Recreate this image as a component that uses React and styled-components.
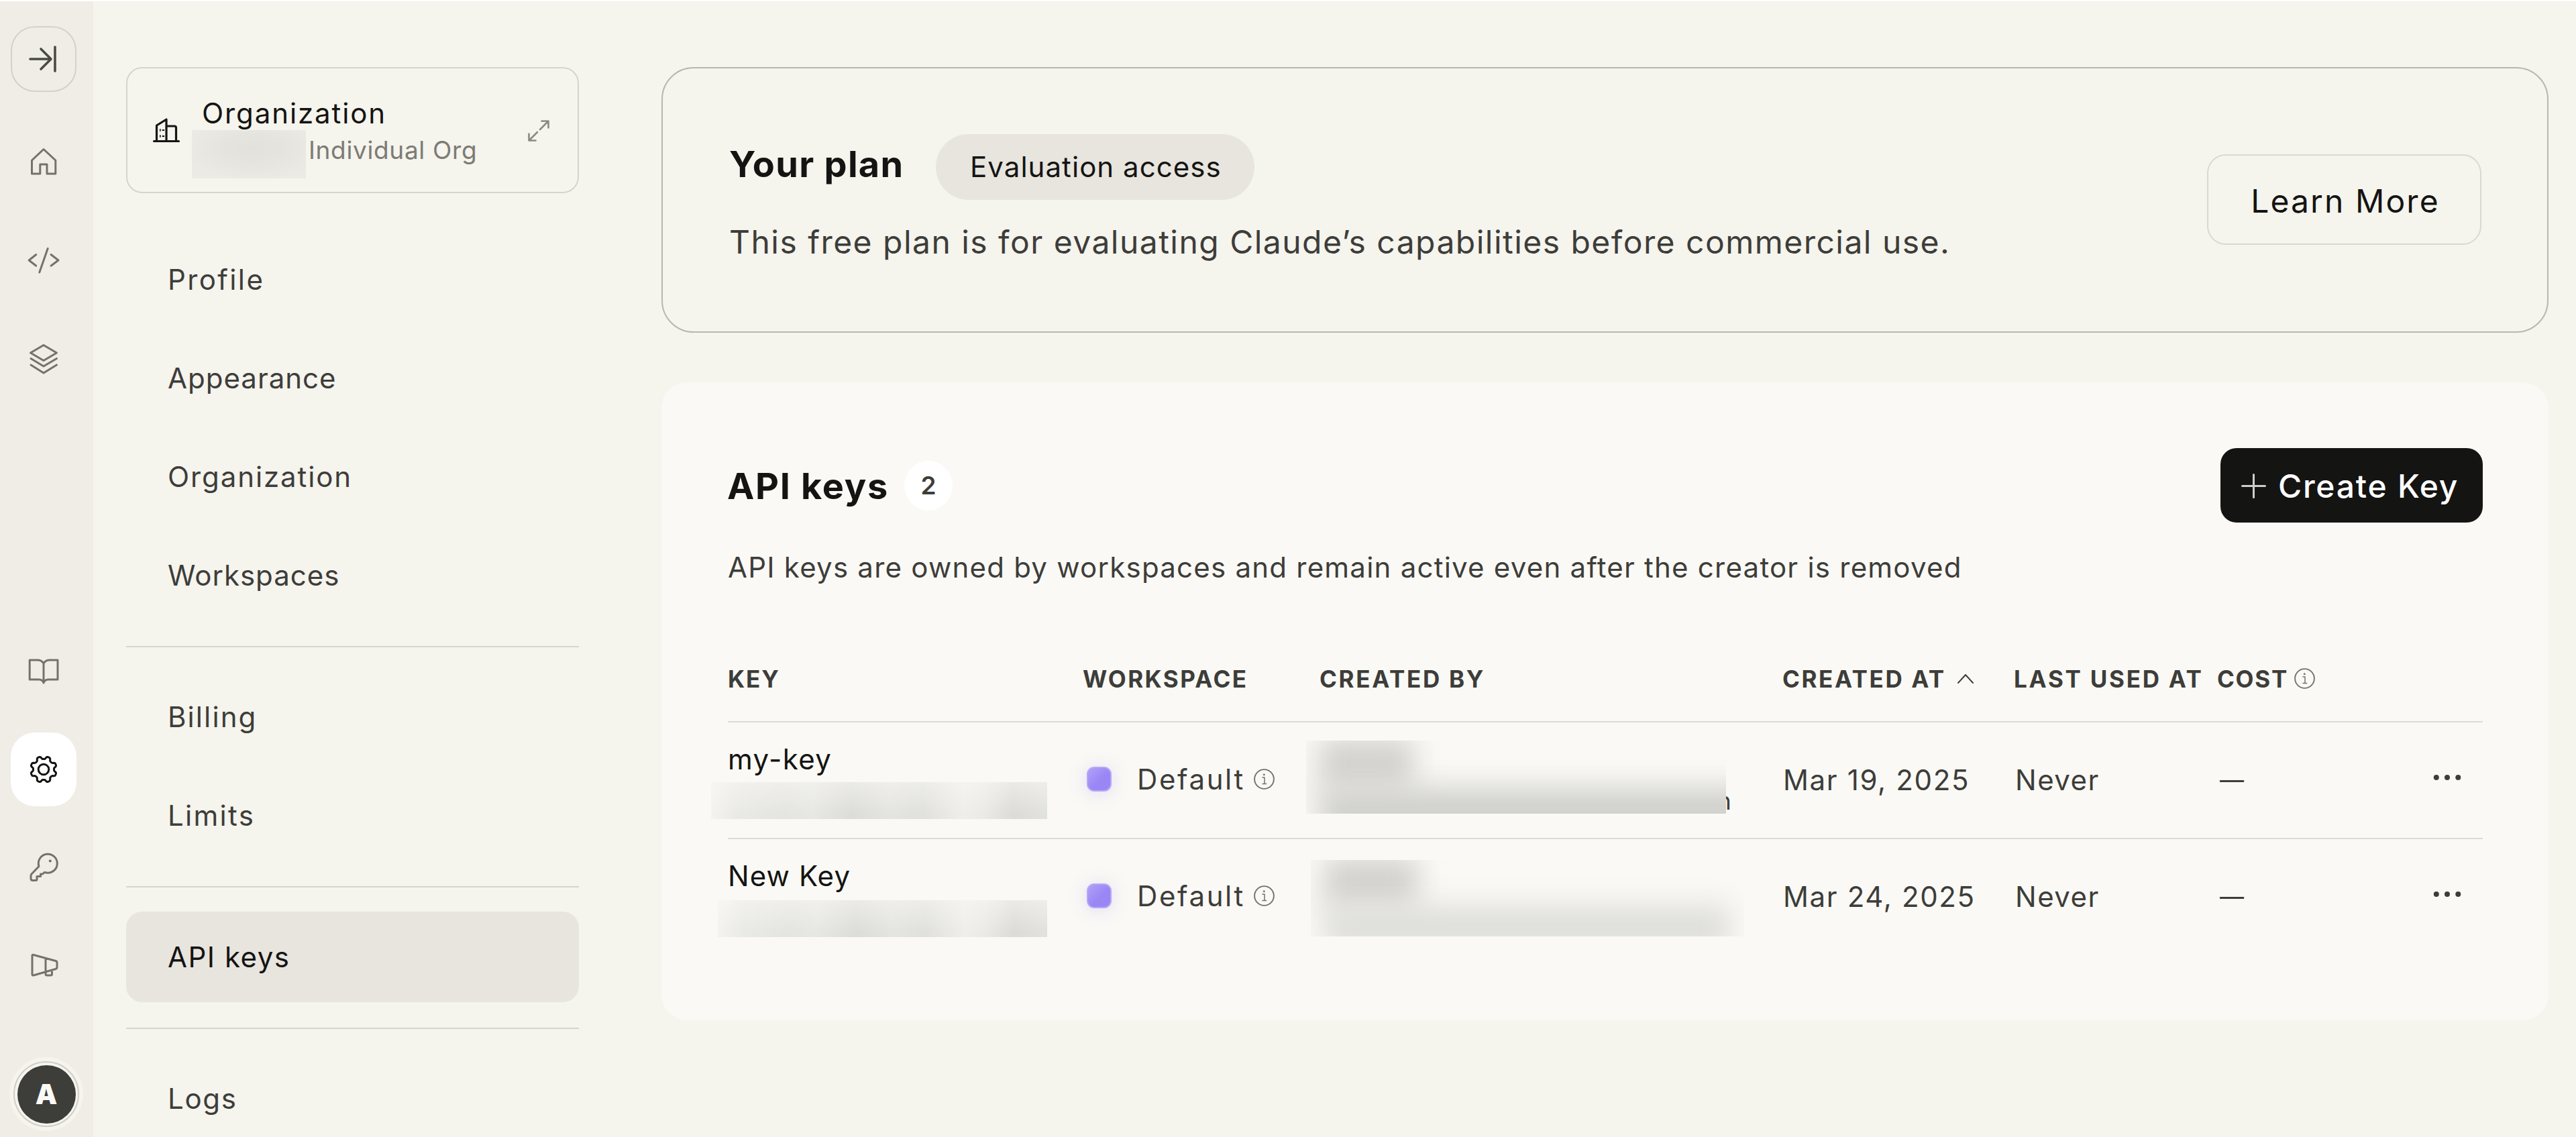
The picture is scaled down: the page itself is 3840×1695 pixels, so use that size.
import React from "react";
import styled, { createGlobalStyle } from "styled-components";

const GlobalStyle = createGlobalStyle`
  * { box-sizing: border-box; }
  body {
    margin: 0;
    background: #f5f4ed;
    font-family: "Inter", "Liberation Sans", sans-serif;
    color: #141413;
  }
  svg { display: block; flex-shrink: 0; overflow: visible; }
`;

/* ---------- icons ---------- */

const Icon = ({ d, size = 48, stroke = 3, children }) => (
  <svg
    width={size}
    height={size}
    viewBox={`0 0 ${size} ${size}`}
    fill="none"
    stroke="currentColor"
    strokeWidth={stroke}
    strokeLinejoin="round"
    strokeLinecap="round"
  >
    {d && <path d={d} />}
    {children}
  </svg>
);

const ExpandSidebarIcon = () => (
  <Icon stroke={3.6} d="M4 24H35M20 9L35 24L20 39M41 6V42" />
);
const HomeIcon = () => (
  <Icon d="M6.5 22L24 5.5L41.8 22V42H29V28H18.8V42H6.5Z" />
);
const CodeIcon = () => (
  <Icon d="M12.8 15.5L2.2 24L12.8 32.2M30.2 6.5L17.8 42M35 15.5L46 24L35 32.2" />
);
const LayersIcon = () => (
  <Icon d="M24 3.5L43.5 15L24 26.5L4.5 15ZM5 23.5L24 35L43.5 23.5M5 33L24 45L43.5 33" />
);
const BookIcon = () => (
  <Icon d="M24 12C22 8.5 18 7 15 7H3.2V36H17C21 36 23 37.5 24 41C25 37.5 27 36 31 36H45V7H33C30 7 26 8.5 24 12ZM24 12V41" />
);
const KeyIcon = () => (
  <Icon d="M17 22.5A14 14 0 1 1 25.5 31.3L22.5 34H19.5V37.5H14V42C14 43 13 43.5 12 43.5H8C6 43.5 5 42.5 5 40.5V36.5C5 35.5 5.3 34.8 6 34Z">
    <circle cx="33.8" cy="14.5" r="1.4" fill="currentColor" strokeWidth="1.4" />
  </Icon>
);
const MegaphoneIcon = () => (
  <Icon d="M7 9.5C7 8.5 8 8 9 8.5L42 17.5C43.5 18 44 19 44 20V27C44 28.5 43.5 29 42 29.5L9 39C8 39.3 7 38.8 7 38ZM27 13.5V34M27 34.5V37C27 38.5 28 39 29 39H34.5C36 39 36.5 38 36.5 37V31.5" />
);

// eight soft teeth around the hub
const gearPath = () => {
  const pts = [];
  for (let deg = 0; deg < 360; deg += 3) {
    const a = (deg * Math.PI) / 180;
    const r = 17.5 + 2.1 * Math.tanh(2 * Math.cos(8 * (a - Math.PI / 8)));
    pts.push(`${(24 + r * Math.cos(a)).toFixed(2)} ${(24 + r * Math.sin(a)).toFixed(2)}`);
  }
  return `M${pts.join("L")}Z`;
};
const GearIcon = () => (
  <Icon stroke={3} d={gearPath()}>
    <circle cx="24" cy="24" r="7.8" />
  </Icon>
);

const BuildingIcon = () => (
  <Icon size={40} stroke={3.2} d="M1.5 35.5H38.5M5.5 35V12L20 3V35M20 13H32C33.8 13 34.5 14 34.5 15.5V35">
    <path d="M10 19H11.6M15.4 18V20M10 28H11.6M15.4 27V29" strokeWidth="3.4" strokeLinecap="butt" />
  </Icon>
);
const ResizeIcon = () => (
  <Icon size={32} stroke={2.6} d="M18 14L30 2M20.5 1.5H30.5V11.5M14 18L2 30M1.5 20.5V30.5H11.5" />
);
const PlusIcon = () => <Icon size={37} stroke={3} d="M18.5 1.5V35.5M1.5 18.5H35.5" />;
const SortIcon = () => <Icon size={24} stroke={2} d="M1 18L12 6L23 18" />;
const InfoIcon = () => (
  <Icon size={31} stroke={1.9}>
    <circle cx="15.5" cy="15.5" r="14.4" />
    <path d="M13 13H16V22M13 22.4H18.6" strokeWidth="1.5" />
    <circle cx="15.2" cy="8.8" r="1.1" fill="currentColor" strokeWidth="0.8" />
  </Icon>
);
const MoreIcon = () => (
  <svg width="42" height="10" viewBox="0 0 42 10" fill="currentColor">
    <circle cx="4.8" cy="5" r="4" />
    <circle cx="21" cy="5" r="4" />
    <circle cx="37.3" cy="5" r="4" />
  </svg>
);

/* ---------- shell ---------- */

const Page = styled.div`
  display: flex;
  align-items: flex-start;
  width: 3840px;
  height: 1695px;
  overflow: hidden;
  border-top: 2px solid #fff;
  background: #f5f4ed;
`;

const Rail = styled.nav`
  display: flex;
  flex-direction: column;
  flex-shrink: 0;
  width: 139px;
  height: 1693px;
  padding: 37px 9px 0 0;
  background: #f0ede6;
  color: #73726c;
`;

const RailButton = styled.button`
  display: flex;
  align-items: center;
  justify-content: center;
  width: 98px;
  height: ${(p) => (p.$outlined ? 98 : 110)}px;
  padding: 0;
  border: ${(p) => (p.$outlined ? "2px solid #d3d2ca" : "0")};
  border-radius: 36px;
  background: ${(p) => (p.$active ? "#fff" : "transparent")};
  color: ${(p) => (p.$active ? "#141413" : p.$outlined ? "#4a4a46" : "inherit")};
`;

const ToggleSlot = styled.div`
  display: flex;
  justify-content: center;
  margin-bottom: 30px;
`;

const RailGroup = styled.div`
  display: grid;
  grid-auto-rows: ${(p) => p.$row}px;
  place-items: center;
  margin-bottom: ${(p) => p.$after}px;
`;

const AvatarHalo = styled.div`
  display: grid;
  place-items: center;
  width: 110px;
  height: 110px;
  margin-left: 14px;
  border-radius: 50%;
  background: #f5f4ed;
`;

const AvatarRing = styled.div`
  display: grid;
  place-items: center;
  width: 98px;
  height: 98px;
  border: 2px solid #cfcec7;
  border-radius: 50%;
`;

const Avatar = styled.div`
  display: grid;
  place-items: center;
  width: 87px;
  height: 87px;
  border-radius: 50%;
  background: #3d3d3a;
  color: #faf9f5;
  font-size: 41px;
  font-weight: 900;
`;

/* ---------- settings sidebar ---------- */

const Sidebar = styled.aside`
  flex-shrink: 0;
  width: 675px;
  margin-left: 49px;
  padding-top: 98px;
`;

const OrgSwitcher = styled.div`
  display: flex;
  align-items: flex-start;
  height: 188px;
  margin-bottom: 61px;
  padding: 41px 42px 0 38px;
  border: 2px solid #d6d5cd;
  border-radius: 24px;
`;

const OrgIcon = styled.div`
  margin: 32px 33px 0 0;
`;

const OrgText = styled.div`
  flex: 1;
`;

const OrgLabel = styled.div`
  font-size: 42px;
  line-height: 51px;
  letter-spacing: 1.9px;
`;

const OrgName = styled.div`
  display: flex;
  align-items: flex-start;
  font-size: 37px;
  line-height: 44px;
  letter-spacing: 0.65px;
  color: #7c7b75;
`;

const OrgNameText = styled.span`
  margin: 8px 0 0 4px;
  white-space: nowrap;
`;

const ResizeSlot = styled.div`
  margin-top: 36px;
  color: #8a8983;
`;

const NavGroup = styled.div`
  display: grid;
  gap: 12px;
`;

const NavItem = styled.a`
  display: flex;
  align-items: center;
  height: 135px;
  padding-left: 62px;
  border-radius: 24px;
  background: ${(p) => (p.$active ? "#e8e5de" : "transparent")};
  color: ${(p) => (p.$active ? "#141413" : "#3d3d3a")};
  font-size: 42px;
  letter-spacing: ${(p) => p.$track}px;
`;

const NavDivider = styled.hr`
  height: 2px;
  margin: 38px 0 36px;
  border: 0;
  background: #d6d5cd;
`;

/* ---------- content ---------- */

const Main = styled.main`
  display: flex;
  flex-direction: column;
  gap: 74px;
  width: 2813px;
  margin-left: 123px;
  padding-top: 98px;
`;

const PlanCard = styled.section`
  display: flex;
  justify-content: space-between;
  height: 396px;
  padding: 98px 98px 0 99px;
  border: 2px solid #b7b6b0;
  border-radius: 48px;
`;

const PlanHeading = styled.div`
  display: flex;
  align-items: center;
  height: 98px;
`;

const PlanTitle = styled.h2`
  width: 308px;
  margin: -10px 0 0;
  font-size: 54px;
  font-weight: 650;
  letter-spacing: 1.3px;
  white-space: nowrap;
`;

const Pill = styled.span`
  display: flex;
  align-items: center;
  width: 475px;
  height: 98px;
  padding: 0 0 2px 51px;
  border-radius: 49px;
  background: #e8e5de;
  font-size: 42px;
  letter-spacing: 1.05px;
  white-space: nowrap;
`;

const PlanText = styled.p`
  margin: 31px 0 0;
  color: #3d3d3a;
  font-size: 48px;
  line-height: 64px;
  letter-spacing: 1.47px;
  white-space: nowrap;
`;

const LearnMore = styled.button`
  width: 409px;
  height: 135px;
  margin-top: 30px;
  padding: 3px 0 0 3px;
  border: 2px solid #dad9d1;
  border-radius: 28px;
  background: transparent;
  color: #141413;
  font: 400 48px "Inter", sans-serif;
  letter-spacing: 2.1px;
`;

const KeysCard = styled.section`
  height: 951px;
  padding: 98px 98px 0 99px;
  border-radius: 38px;
  background: #faf9f5;
`;

const KeysHeader = styled.div`
  display: flex;
  align-items: center;
  height: 111px;
`;

const KeysTitle = styled.h2`
  width: 264px;
  margin: 1px 0 0 -1px;
  font-size: 54px;
  font-weight: 650;
  letter-spacing: 1.7px;
  white-space: nowrap;
`;

const Count = styled.span`
  display: grid;
  place-items: center;
  width: 72px;
  height: 74px;
  border-radius: 50%;
  background: #fff;
  color: #3d3d3a;
  font-size: 37px;
  font-weight: 600;
`;

const CreateKey = styled.button`
  display: flex;
  align-items: center;
  gap: 18px;
  width: 391px;
  height: 111px;
  margin-left: auto;
  padding: 1px 0 0 31px;
  border: 0;
  border-radius: 24px;
  background: #141413;
  color: #cfcec9;
  font: 550 48px "Inter", sans-serif;
  letter-spacing: 1.75px;
  white-space: nowrap;
`;

const CreateKeyLabel = styled.span`
  color: #fff;
`;

const KeysText = styled.p`
  margin: 37px 0 72px;
  color: #3d3d3a;
  font-size: 42px;
  line-height: 60px;
  letter-spacing: 1.23px;
  white-space: nowrap;
`;

const TableRow = styled.div`
  display: grid;
  grid-template-columns: 529px 353px 690px 345px 303px 1fr 74px;
  align-items: center;
  height: ${(p) => (p.$head ? 129 : 174)}px;
  border-bottom: ${(p) => (p.$last ? "2px solid transparent" : "2px solid #dcdbd5")};
`;

const HeadCell = styled.div`
  display: flex;
  align-items: center;
  gap: ${(p) => p.$gap || 0}px;
  color: #3d3d3a;
  font-size: 35px;
  font-weight: 750;
  letter-spacing: ${(p) => p.$track}px;
  white-space: nowrap;
`;

const HeadIcon = styled.span`
  color: #73726c;
`;

const KeyCell = styled.div`
  align-self: start;
  padding-top: 25px;
`;

const KeyName = styled.div`
  font-size: 42px;
  line-height: 60px;
  letter-spacing: ${(p) => p.$track}px;
`;

const WorkspaceCell = styled.div`
  display: flex;
  align-items: center;
  padding: 0 0 4px 6px;
  color: #3d3d3a;
  font-size: 42px;
  letter-spacing: 2.6px;
`;

const WorkspaceSwatch = styled.span`
  width: 37px;
  height: 37px;
  margin-right: 38px;
  border: 2px solid #b5a8f8;
  border-radius: 11px;
  background: linear-gradient(135deg, #b0a1f7, #9a87f5 55%);
  box-shadow: 0 2px 26px rgba(154, 135, 245, 0.26);
`;

const WorkspaceInfo = styled.span`
  margin-left: 13px;
  color: #73726c;
`;

const CreatedByCell = styled.div`
  display: flex;
  align-self: start;
`;

const TextCell = styled.div`
  padding: 0 0 1px ${(p) => p.$indent}px;
  color: #3d3d3a;
  font-size: ${(p) => p.$size || 42}px;
  letter-spacing: ${(p) => p.$track}px;
  white-space: nowrap;
`;

const MenuCell = styled.div`
  padding-bottom: 8px;
  color: #3d3d3a;
`;

/* ---------- blurred-out private values ---------- */

const Masked = styled.div`
  flex-shrink: 0;
  overflow: hidden;
  width: ${(p) => p.$w}px;
  height: ${(p) => p.$h}px;
  margin: ${(p) => p.$top || 0}px 0 0 ${(p) => p.$left || 0}px;
`;

const MaskedOrg = styled(Masked)`
  background: radial-gradient(ellipse 60% 65% at 54% 38%, #e4e1dc, #e5e4df 45%, #eceae4);
`;

const MaskedKey = styled(Masked)`
  background:
    linear-gradient(to bottom, rgba(250, 249, 245, 0.5), transparent 85%),
    linear-gradient(
      to right,
      #f4f3f0, #e9e9e5 8%, #e4e4e0 22%, #e7e7e3 30%, #dcdcd8 42%, #e4e4e0 53%,
      #e0e0dc 63%, #efeeeb 75%, #ebeae7 81%, #dcdbd7 90%, #e2e2de
    );
`;

const MaskedPerson = styled(Masked)`
  position: relative;
  z-index: 1;
  display: flex;
  flex-direction: column;
  padding-left: 20px;
  background: #faf9f5;
`;

const Smudge = styled.span`
  flex-shrink: 0;
  width: ${(p) => p.$w}px;
  height: ${(p) => p.$h}px;
  margin-top: ${(p) => p.$top}px;
  background: ${(p) => p.$tone};
  filter: blur(20px);
`;

// last letter of the address, sticking out past the mask
const Leftover = styled.span`
  margin: 95px 0 0 -14px;
  color: #3d3d3a;
  font-size: 37px;
  line-height: 44px;
`;

/* ---------- data ---------- */

const navGroups = [
  [
    ["Profile", 2.4],
    ["Appearance", 1],
    ["Organization", 1.9],
    ["Workspaces", 1],
  ],
  [
    ["Billing", 2.1],
    ["Limits", 2.3],
  ],
  [["API keys", 1.5]],
  [["Logs", 1.7]],
];

const keys = [
  {
    name: "my-key",
    track: 1.4,
    created: "Mar 19, 2025",
    mask: { $w: 501, $h: 55, $left: -25, $top: 4 },
    person: { $w: 626, $h: 109, $left: -20, $top: 27 },
    email: { $w: 660, $h: 74, $top: -2, $tone: "#d0d0cc" },
    leftover: "n",
  },
  {
    name: "New Key",
    track: 1.1,
    created: "Mar 24, 2025",
    mask: { $w: 491, $h: 55, $left: -15, $top: 6 },
    person: { $w: 646, $h: 114, $left: -13, $top: 31 },
    email: { $w: 604, $h: 66, $top: -4, $tone: "#dededa" },
  },
];

export default function App() {
  return (
    <>
      <GlobalStyle />
      <Page>
        <Rail>
          <ToggleSlot>
            <RailButton $outlined>
              <ExpandSidebarIcon />
            </RailButton>
          </ToggleSlot>
          <RailGroup $row={147} $after={320}>
            <RailButton><HomeIcon /></RailButton>
            <RailButton><CodeIcon /></RailButton>
            <RailButton><LayersIcon /></RailButton>
          </RailGroup>
          <RailGroup $row={146} $after={64}>
            <RailButton><BookIcon /></RailButton>
            <RailButton $active><GearIcon /></RailButton>
            <RailButton><KeyIcon /></RailButton>
            <RailButton><MegaphoneIcon /></RailButton>
          </RailGroup>
          <AvatarHalo>
            <AvatarRing>
              <Avatar>A</Avatar>
            </AvatarRing>
          </AvatarHalo>
        </Rail>

        <Sidebar>
          <OrgSwitcher>
            <OrgIcon>
              <BuildingIcon />
            </OrgIcon>
            <OrgText>
              <OrgLabel>Organization</OrgLabel>
              <OrgName>
                <MaskedOrg $w={170} $h={72} $left={-15} />
                <OrgNameText>Individual Org</OrgNameText>
              </OrgName>
            </OrgText>
            <ResizeSlot>
              <ResizeIcon />
            </ResizeSlot>
          </OrgSwitcher>
          {navGroups.map((group, i) => (
            <React.Fragment key={i}>
              {i > 0 && <NavDivider />}
              <NavGroup>
                {group.map(([label, track]) => (
                  <NavItem key={label} $track={track} $active={label === "API keys"}>
                    {label}
                  </NavItem>
                ))}
              </NavGroup>
            </React.Fragment>
          ))}
        </Sidebar>

        <Main>
          <PlanCard>
            <div>
              <PlanHeading>
                <PlanTitle>Your plan</PlanTitle>
                <Pill>Evaluation access</Pill>
              </PlanHeading>
              <PlanText>
                This free plan is for evaluating Claude’s capabilities before commercial use.
              </PlanText>
            </div>
            <LearnMore>Learn More</LearnMore>
          </PlanCard>

          <KeysCard>
            <KeysHeader>
              <KeysTitle>API keys</KeysTitle>
              <Count>2</Count>
              <CreateKey>
                <PlusIcon />
                <CreateKeyLabel>Create Key</CreateKeyLabel>
              </CreateKey>
            </KeysHeader>
            <KeysText>
              API keys are owned by workspaces and remain active even after the creator is removed
            </KeysText>

            <TableRow $head>
              <HeadCell $track={1.9}>KEY</HeadCell>
              <HeadCell $track={2.4}>WORKSPACE</HeadCell>
              <HeadCell $track={2.7}>CREATED BY</HeadCell>
              <HeadCell $track={2.6} $gap={17}>
                CREATED AT <SortIcon />
              </HeadCell>
              <HeadCell $track={2.75}>LAST USED AT</HeadCell>
              <HeadCell $track={1.7} $gap={9}>
                COST
                <HeadIcon>
                  <InfoIcon />
                </HeadIcon>
              </HeadCell>
            </TableRow>
            {keys.map((k, i) => (
              <TableRow key={k.name} $last={i === keys.length - 1}>
                <KeyCell>
                  <KeyName $track={k.track}>{k.name}</KeyName>
                  <MaskedKey {...k.mask} />
                </KeyCell>
                <WorkspaceCell>
                  <WorkspaceSwatch />
                  Default
                  <WorkspaceInfo>
                    <InfoIcon />
                  </WorkspaceInfo>
                </WorkspaceCell>
                <CreatedByCell>
                  <MaskedPerson {...k.person}>
                    <Smudge $w={140} $h={76} $top={-4} $tone="#d3d2ce" />
                    <Smudge {...k.email} />
                  </MaskedPerson>
                  {k.leftover && <Leftover>{k.leftover}</Leftover>}
                </CreatedByCell>
                <TextCell $indent={1} $track={1.65}>{k.created}</TextCell>
                <TextCell $indent={2} $track={1.5}>Never</TextCell>
                <TextCell $indent={4} $size={36}>—</TextCell>
                <MenuCell>
                  <MoreIcon />
                </MenuCell>
              </TableRow>
            ))}
          </KeysCard>
        </Main>
      </Page>
    </>
  );
}
